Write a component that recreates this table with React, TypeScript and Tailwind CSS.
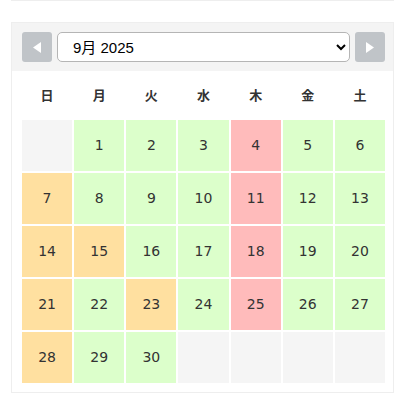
const weekdays = ["日", "月", "火", "水", "木", "金", "土"];

type Day = { n?: number; c: "g" | "o" | "r" | "e" };

const cellClass: Record<Day["c"], string> = {
  g: "bg-[#dcffcb]",
  o: "bg-[#ffe0a0]",
  r: "bg-[#ffbbbb]",
  e: "bg-[#f5f5f5]",
};

const rows: Day[][] = [
  [{ c: "e" }, { n: 1, c: "g" }, { n: 2, c: "g" }, { n: 3, c: "g" }, { n: 4, c: "r" }, { n: 5, c: "g" }, { n: 6, c: "g" }],
  [{ n: 7, c: "o" }, { n: 8, c: "g" }, { n: 9, c: "g" }, { n: 10, c: "g" }, { n: 11, c: "r" }, { n: 12, c: "g" }, { n: 13, c: "g" }],
  [{ n: 14, c: "o" }, { n: 15, c: "o" }, { n: 16, c: "g" }, { n: 17, c: "g" }, { n: 18, c: "r" }, { n: 19, c: "g" }, { n: 20, c: "g" }],
  [{ n: 21, c: "o" }, { n: 22, c: "g" }, { n: 23, c: "o" }, { n: 24, c: "g" }, { n: 25, c: "r" }, { n: 26, c: "g" }, { n: 27, c: "g" }],
  [{ n: 28, c: "o" }, { n: 29, c: "g" }, { n: 30, c: "g" }, { c: "e" }, { c: "e" }, { c: "e" }, { c: "e" }],
];

function NavButton({ dir }: { dir: "prev" | "next" }) {
  return (
    <button className="w-[30px] h-[30px] shrink-0 rounded-[3px] bg-[#c0c4c8] flex items-center justify-center">
      <svg width="8" height="11" viewBox="0 0 8 11">
        {dir === "prev" ? (
          <path d="M8 0 L0 5.5 L8 11 Z" fill="#fff" />
        ) : (
          <path d="M0 0 L8 5.5 L0 11 Z" fill="#fff" />
        )}
      </svg>
    </button>
  );
}

export default function App() {
  return (
    <div className="w-[405px] h-[420px] bg-white px-[11px]">
      <div className="h-[1px] bg-[#eeeeee]" />

      {/* カレンダー */}
      <div className="mt-[21px] border border-[#eeeeee]">
        <div className="bg-[#f4f4f4] flex items-center gap-[5px] pl-[10px] pr-[8px] pt-[9px] pb-[9px]">
          <NavButton dir="prev" />
          <select
            className="flex-1 h-[30px] rounded-[5px] border border-[#b5b5b5] bg-white pl-[11px] pr-[4px] text-[15px] text-black"
            style={{ fontFamily: '"Liberation Sans", "Noto Sans CJK JP", sans-serif' }}
            defaultValue="2025-09"
          >
            <option value="2025-09">9月 2025</option>
          </select>
          <NavButton dir="next" />
        </div>

        <div className="pl-[10px] pr-[8px] pb-[9px]">
          <div
            className="grid grid-cols-7 gap-x-[2px] h-[47px] items-center text-[13px] font-bold text-[#333]"
            style={{ fontFamily: '"Noto Sans CJK JP", sans-serif' }}
          >
            {weekdays.map((w) => (
              <div key={w} className="text-center">
                {w}
              </div>
            ))}
          </div>

          <div
            className="mt-[2px] grid grid-cols-7 gap-[2px] text-[14px] text-[#333]"
            style={{ fontFamily: '"DejaVu Sans", sans-serif' }}
          >
            {rows.flat().map((d, i) => (
              <div
                key={i}
                className={`h-[51px] flex items-center justify-center ${cellClass[d.c]}`}
              >
                {d.n}
              </div>
            ))}
          </div>
        </div>
      </div>
    </div>
  );
}
